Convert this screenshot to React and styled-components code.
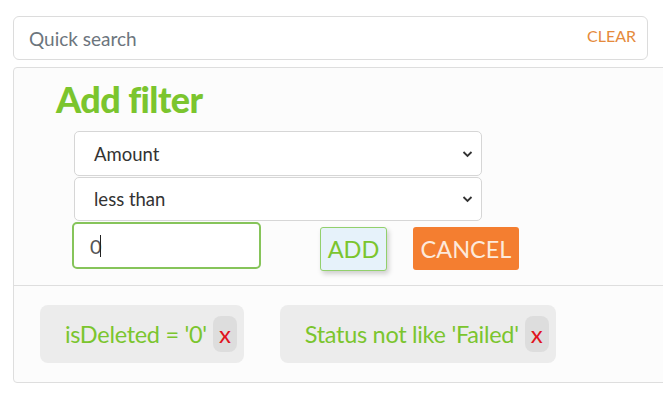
import styled, { createGlobalStyle } from "styled-components";

const GlobalStyle = createGlobalStyle`
  body {
    margin: 0;
    background: #fff;
    font-family: Lato, "Open Sans", sans-serif;
    overflow: hidden;
  }
`;

const Page = styled.div`
  padding: 16px 0 0 13px;
  width: 663px;
  box-sizing: border-box;
`;

const SearchBar = styled.div`
  width: 635px;
  height: 44px;
  box-sizing: border-box;
  border: 1px solid #dcdcdc;
  border-radius: 6px;
  display: flex;
  align-items: center;
  justify-content: space-between;
  padding: 0 11px 0 15px;
`;

const SearchInput = styled.input`
  border: none;
  outline: none;
  flex: 1;
  font-family: Lato, sans-serif;
  font-size: 19px;
  color: #333;
  background: transparent;
  padding: 0;

  &::placeholder {
    color: #6c757d;
  }
`;

const ClearLink = styled.span`
  color: #e58a3c;
  font-size: 16px;
  margin-top: -6px;
`;

const Panel = styled.div`
  margin-top: 7px;
  width: 665px;
  box-sizing: border-box;
  border: 1px solid #dedede;
  border-radius: 4px;
  background: #fcfcfc;
`;

const FilterForm = styled.div`
  padding: 12px 0 14px 42px;
  border-bottom: 1px solid #dedede;
`;

const Title = styled.h2`
  margin: 0 0 13px;
  font-size: 36px;
  line-height: 38px;
  font-weight: 900;
  color: #7bc52e;
  letter-spacing: -0.6px;
`;

const Fields = styled.div`
  padding-left: 18px;
  display: flex;
  flex-direction: column;
  gap: 1px;
`;

const SelectBox = styled.div`
  position: relative;
  width: 408px;
  height: ${(p) => p.h}px;
  box-sizing: border-box;
  border: 1px solid #d6d6d6;
  border-radius: 5px;
  background: #fff;
  display: flex;
  align-items: center;
  padding-left: 19px;
  font-size: 18.5px;
  color: #333;
`;

const Chevron = styled.svg`
  position: absolute;
  right: 8px;
  top: 50%;
  margin-top: -5px;
`;

const ActionRow = styled.div`
  display: flex;
  align-items: flex-start;
  margin-left: -2px;
`;

const ValueInput = styled.div`
  width: 189px;
  height: 47px;
  box-sizing: border-box;
  border: 2px solid #86c45a;
  border-radius: 5px;
  background: #fff;
  display: flex;
  align-items: center;
  padding-left: 16px;
  font-size: 20px;
  color: #555;
`;

const Caret = styled.span`
  display: inline-block;
  width: 1.5px;
  height: 22px;
  background: #222;
  margin-left: -2px;
`;

const Button = styled.button`
  margin-top: 5px;
  height: ${(p) => p.h}px;
  box-sizing: border-box;
  font-family: Lato, sans-serif;
  font-size: 23.5px;
  padding: 0;
  border-radius: 3px;
  cursor: pointer;
`;

const AddButton = styled(Button)`
  margin-left: 59px;
  width: 67px;
  background: #e6f2fa;
  color: #7bc52e;
  border: 1px solid #92d06c;
  box-shadow: 2px 3px 5px rgba(0, 0, 0, 0.18);
`;

const CancelButton = styled(Button)`
  margin-left: 26px;
  width: 106px;
  background: #f47e30;
  color: #fde9db;
  border: none;
`;

const ChipList = styled.div`
  display: flex;
  gap: 36px;
  padding: 19px 0 19px 26px;
`;

const Chip = styled.div`
  height: 58px;
  box-sizing: border-box;
  border-radius: 8px;
  background: #ececec;
  display: flex;
  align-items: center;
  padding: 0 7px 0 25px;
  font-size: 23.5px;
  color: #7bc52e;
  letter-spacing: -0.3px;
`;

const RemoveButton = styled.span`
  margin-left: 6px;
  width: 24px;
  height: 36px;
  border-radius: 8px;
  background: #dddddd;
  color: #e0141e;
  display: flex;
  align-items: center;
  justify-content: center;
  font-size: 24px;
  padding-bottom: 2px;
  box-sizing: border-box;
`;

const ChevronIcon = () => (
  <Chevron width="11" height="10" viewBox="0 0 11 10">
    <path d="M1.5 3 L5.5 7 L9.5 3" fill="none" stroke="#333" strokeWidth="1.8" />
  </Chevron>
);

const filters = ["isDeleted = '0'", "Status not like 'Failed'"];

export default function App() {
  return (
    <>
      <GlobalStyle />
      <Page>
        <SearchBar>
          <SearchInput placeholder="Quick search" />
          <ClearLink>CLEAR</ClearLink>
        </SearchBar>
        <Panel>
          <FilterForm>
            <Title>Add filter</Title>
            <Fields>
              <SelectBox h={45}>
                Amount
                <ChevronIcon />
              </SelectBox>
              <SelectBox h={44}>
                less than
                <ChevronIcon />
              </SelectBox>
              <ActionRow>
                <ValueInput>
                  0<Caret />
                </ValueInput>
                <AddButton h={44}>ADD</AddButton>
                <CancelButton h={43}>CANCEL</CancelButton>
              </ActionRow>
            </Fields>
          </FilterForm>
          <ChipList>
            {filters.map((f) => (
              <Chip key={f}>
                {f}
                <RemoveButton>x</RemoveButton>
              </Chip>
            ))}
          </ChipList>
        </Panel>
      </Page>
    </>
  );
}
